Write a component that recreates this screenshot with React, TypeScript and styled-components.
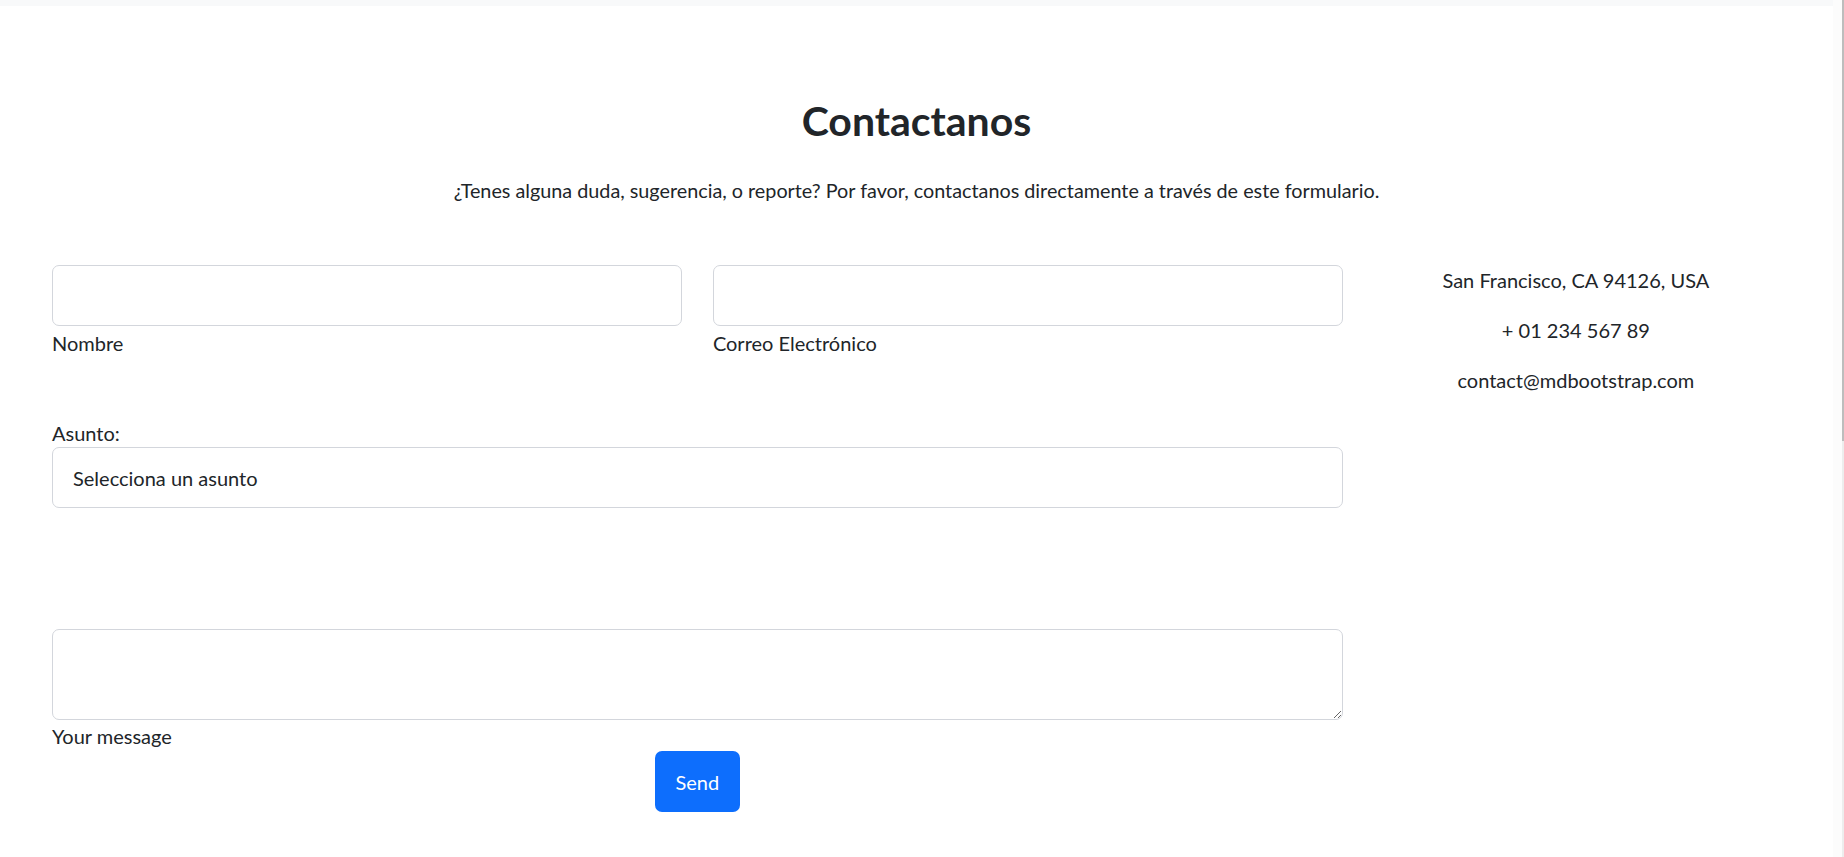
import React from "react";
import styled, { createGlobalStyle } from "styled-components";

const GlobalStyle = createGlobalStyle`
  html, body {
    margin: 0;
    padding: 0;
    height: 100%;
    overflow: hidden;
    background: #fff;
  }
  body {
    font-family: Lato, "Noto Sans", sans-serif;
    color: #212529;
    font-size: 20px;
  }
  * {
    box-sizing: border-box;
  }
`;

export default function App() {
  return (
    <>
      <GlobalStyle />
      <Page>
        <Main>
          <TopBar />
          <Section>
            <Title>Contactanos</Title>
            <Lead>
              ¿Tenes alguna duda, sugerencia, o reporte? Por favor, contactanos
              directamente a través de este formulario.
            </Lead>
            <Row>
              <FormColumn>
                <TwoFields>
                  <Field>
                    <Input type="text" />
                    <Label>Nombre</Label>
                  </Field>
                  <Field>
                    <Input type="email" />
                    <Label>Correo Electrónico</Label>
                  </Field>
                </TwoFields>

                <SubjectBlock>
                  <Label>Asunto:</Label>
                  <Select defaultValue="">
                    <option value="">Selecciona un asunto</option>
                  </Select>
                </SubjectBlock>

                <MessageBlock>
                  <TextArea />
                  <Label>Your message</Label>
                </MessageBlock>

                <Actions>
                  <SendButton type="button">Send</SendButton>
                </Actions>
              </FormColumn>

              <ContactColumn>
                <ContactLine>San Francisco, CA 94126, USA</ContactLine>
                <ContactLine>+ 01 234 567 89</ContactLine>
                <ContactLine>contact@mdbootstrap.com</ContactLine>
              </ContactColumn>
            </Row>
          </Section>
        </Main>
        <Gutter>
          <Thumb />
        </Gutter>
      </Page>
    </>
  );
}

const Page = styled.div`
  display: grid;
  grid-template-columns: 1fr 11px;
  height: 100vh;
`;

const Main = styled.main`
  min-width: 0;
`;

const TopBar = styled.div`
  height: 6px;
  background: #f8f9fa;
`;

const Section = styled.section`
  padding: 90px 40px 0;
`;

const Title = styled.h1`
  margin: 0;
  text-align: center;
  font-size: 41px;
  font-weight: 700;
  line-height: 1.2;
`;

const Lead = styled.p`
  margin: 30px 0 0;
  text-align: center;
  font-size: 19.8px;
  line-height: 30px;
`;

const Row = styled.div`
  display: grid;
  grid-template-columns: 3fr 1fr;
  margin-top: 60px;
`;

const FormColumn = styled.div`
  padding: 0 12px;
  display: flex;
  flex-direction: column;
`;

const TwoFields = styled.div`
  display: grid;
  grid-template-columns: 1fr 1fr;
  column-gap: 31px;
`;

const Field = styled.div`
  display: flex;
  flex-direction: column;
`;

const Label = styled.label`
  display: block;
  font-size: 20px;
  line-height: 24px;
  margin-top: 5px;
`;

const controlBase = `
  width: 100%;
  border: 1px solid #d3d6dc;
  border-radius: 7px;
  background: #fff;
  font-family: Lato, "Noto Sans", sans-serif;
  color: #212529;
  outline: none;
`;

const Input = styled.input`
  ${controlBase}
  height: 61px;
  padding: 0 20px;
  font-size: 20px;
`;

const SubjectBlock = styled.div`
  margin-top: 66px;
  display: flex;
  flex-direction: column;

  & > label {
    margin: 0 0 2px;
  }
`;

const Select = styled.select`
  ${controlBase}
  height: 61px;
  padding: 0 20px;
  font-size: 20px;
  appearance: none;
  -webkit-appearance: none;
`;

const MessageBlock = styled.div`
  margin-top: 121px;
  display: flex;
  flex-direction: column;

  & > label {
    margin-top: 4px;
  }
`;

const TextArea = styled.textarea`
  ${controlBase}
  display: block;
  height: 91px;
  padding: 12px 20px;
  font-size: 20px;
  resize: vertical;
`;

const Actions = styled.div`
  display: flex;
  justify-content: center;
  margin-top: 3px;
`;

const SendButton = styled.button`
  height: 61px;
  padding: 0 21px;
  border: none;
  border-radius: 7px;
  background: #0d6efd;
  color: #fff;
  font-family: Lato, "Noto Sans", sans-serif;
  font-size: 20px;
  cursor: pointer;
`;

const ContactColumn = styled.div`
  padding: 0 10px 0 14px;
  text-align: center;
  display: flex;
  flex-direction: column;
  gap: 20px;
`;

const ContactLine = styled.p`
  margin: 0;
  font-size: 20px;
  line-height: 30px;
`;

const Gutter = styled.div`
  background: #fcfcfc;
  display: flex;
  justify-content: flex-end;
  background-image: linear-gradient(to right, transparent 9px, #ededed 9px);
`;

const Thumb = styled.div`
  width: 2px;
  height: 441px;
  background: #bdbdbd;
`;
